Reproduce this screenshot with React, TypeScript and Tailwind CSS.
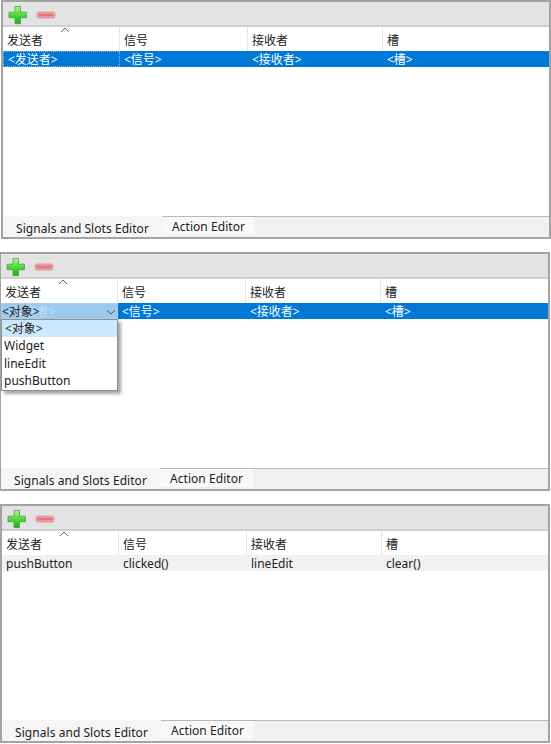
const font = { fontFamily: '"Noto Sans", "Noto Sans CJK SC", sans-serif' };

function Plus() {
  return (
    <svg width="20" height="20" viewBox="0 0 20 20" className="shrink-0">
      <defs>
        <linearGradient id="pg" x1="0" y1="0" x2="0" y2="1">
          <stop offset="0" stopColor="#b4f29c" />
          <stop offset="0.45" stopColor="#55dc40" />
          <stop offset="1" stopColor="#22a826" />
        </linearGradient>
      </defs>
      <path d="M7 1.500h5.500v5.700H18.500v5.500H12.500v6H7v-6H1v-5.500h6z" fill="url(#pg)" stroke="#45a83f" strokeWidth="0.8" />
    </svg>
  );
}

function Minus() {
  return (
    <svg width="20" height="10" viewBox="0 0 20 10" className="shrink-0">
      <rect x="1" y="2" width="18" height="6" rx="2" fill="#ea9a9e" stroke="#d4a3a5" strokeWidth="1" />
      <rect x="3" y="4" width="14" height="2" fill="#ee7078" />
    </svg>
  );
}

function Cell({ w, children, cls = "" }: { w: string; children: React.ReactNode; cls?: string }) {
  return <div className={`${w} shrink-0 flex items-center pl-[4px] pt-[2px] ${cls}`}>{children}</div>;
}

const widths = ["w-[117px]", "w-[128px]", "w-[135px]", "flex-1"];

function Header({ labels, top }: { labels: string[]; top: string }) {
  return (
    <div className="relative flex h-[24px] bg-white text-[12px] text-[#222]">
      {labels.map((l, i) => (
        <div key={l} className={`${widths[i]} ${i < 3 ? "shrink-0 border-r border-[#e6e6e6]" : ""} ${top} flex items-center pl-[4px]`}>
          {l}
        </div>
      ))}
      <svg width="10" height="6" viewBox="0 0 10 6" className="absolute left-[57px] top-0">
        <path d="M1 5l4-4 4 4" fill="none" stroke="#666" strokeWidth="1" />
      </svg>
    </div>
  );
}

function Panel({ children, cls }: { children: React.ReactNode; cls: string }) {
  return (
    <div className={`flex h-[239px] flex-col border-2 border-[#a3a3a3] bg-white ${cls}`}>
      <div className="flex h-[25px] shrink-0 items-center gap-[8px] border-b-2 border-[#cfcfcf] bg-[#e3e3e3] pl-[5px] pt-[3px]">
        <Plus />
        <Minus />
      </div>
      <div className="relative flex min-h-0 flex-1 flex-col">{children}</div>
      <div className="flex h-[21px] shrink-0 border-t border-[#b8b8b8] bg-[#f0f0f0] text-[12px] tracking-[0.05px] text-[#222]">
        <div className="-mt-px flex w-[159px] items-center justify-center bg-[#f5f5f5] pt-[4px]">Signals and Slots Editor</div>
        <div className="flex h-[18px] w-[93px] items-center justify-center bg-[#f8f8f8] pt-[2px]">Action Editor</div>
      </div>
    </div>
  );
}

const labels = ["发送者", "信号", "接收者", "槽"];

function SelectedRow() {
  return (
    <div className="flex h-[16px] bg-[#0078d7] text-[12px] text-white">
      <Cell w={widths[0]} cls="border border-dotted border-[#9bb9d6]">&lt;发送者&gt;</Cell>
      <Cell w={widths[1]}>&lt;信号&gt;</Cell>
      <Cell w={widths[2]}>&lt;接收者&gt;</Cell>
      <Cell w={widths[3]}>&lt;槽&gt;</Cell>
    </div>
  );
}

export default function App() {
  return (
    <div className="h-[744px] w-[551px] overflow-hidden bg-white" style={font}>
      <Panel cls="ml-[1px] w-[550px]">
        <Header labels={labels} top="pt-[3px]" />
        <SelectedRow />
      </Panel>
      <Panel cls="-ml-[1px] mt-[13px] w-[551px]">
        <Header labels={labels} top="pt-[3px]" />
        <div className="relative">
          <SelectedRow />
          <div className="absolute left-0 top-0 flex h-[16px] w-[117px] items-center justify-between bg-[#b7d7f2]/85 pl-[1px] pr-[2px] pt-[1px] text-[12px] text-[#222]">
            <span>&lt;对象&gt;</span>
            <svg width="10" height="6" viewBox="0 0 10 6">
              <path d="M1 1l4 4 4-4" fill="none" stroke="#555" strokeWidth="1" />
            </svg>
          </div>
          <div className="absolute left-0 top-[16px] z-10 w-[117px] border border-[#8f8f8f] bg-white text-[12px] leading-[17.500px] text-[#222] shadow-[3px_3px_3px_rgba(0,0,0,0.35)]">
            <div className="h-[17px] bg-[#cce8ff] pl-[3px]">&lt;对象&gt;</div>
            <div className="pl-[2px]">Widget</div>
            <div className="pl-[2px]">lineEdit</div>
            <div className="pl-[2px]">pushButton</div>
          </div>
        </div>
      </Panel>
      <Panel cls="mt-[13px] w-[550px]">
        <Header labels={labels} top="pt-[4px]" />
        <div className="flex h-[16px] bg-[#f1f1f1] text-[12px] text-[#222]">
          <Cell w={widths[0]}>pushButton</Cell>
          <Cell w={widths[1]}>clicked()</Cell>
          <Cell w={widths[2]}>lineEdit</Cell>
          <Cell w={widths[3]}>clear()</Cell>
        </div>
      </Panel>
    </div>
  );
}
